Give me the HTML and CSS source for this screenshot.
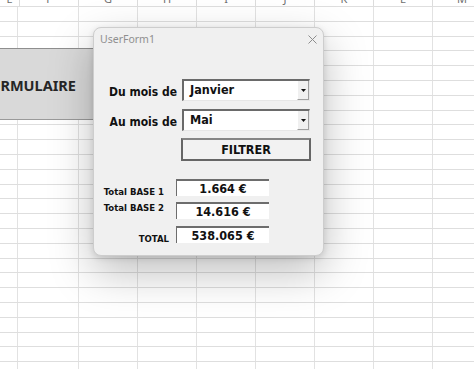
FILE: index.html
```html
<!DOCTYPE html>
<html lang="fr">
<head>
<meta charset="utf-8">
<title>UserForm1</title>
<link rel="stylesheet" href="styles.css">
</head>
<body>
<div class="sheet">
  <div class="colhead">
    <div class="col first"><span>E</span></div>
    <div class="col"><span>F</span></div>
    <div class="col"><span>G</span></div>
    <div class="col"><span>H</span></div>
    <div class="col"><span>I</span></div>
    <div class="col"><span>J</span></div>
    <div class="col"><span>K</span></div>
    <div class="col"><span>L</span></div>
    <div class="col"><span>M</span></div>
  </div>
  <div class="cells"></div>
</div>

<div class="shape"><span class="shape-text">FORMULAIRE</span></div>

<div class="dialog">
  <div class="titlebar">
    <span class="title">UserForm1</span>
    <svg class="close" width="9" height="9" viewBox="0 0 9 9"><path d="M0.5 0.5 L8.5 8.5 M8.5 0.5 L0.5 8.5" stroke="#8d8d8d" stroke-width="1" fill="none"/></svg>
  </div>
  <div class="form">
    <div class="pick-row">
      <span class="pick-label">Du mois de</span>
      <div class="combo"><span class="combo-text">Janvier</span><span class="drop"><svg width="5" height="3" viewBox="0 0 5 3"><path d="M0 0 H5 L2.5 3 Z" fill="#111"/></svg></span></div>
    </div>
    <div class="pick-row second">
      <span class="pick-label">Au mois de</span>
      <div class="combo"><span class="combo-text">Mai</span><span class="drop"><svg width="5" height="3" viewBox="0 0 5 3"><path d="M0 0 H5 L2.5 3 Z" fill="#111"/></svg></span></div>
    </div>
    <div class="btn-row"><button class="btn">FILTRER</button></div>

    <div class="totals">
      <div class="tot-row r1"><span class="tot-label low">Total BASE 1</span><span class="tot-box">1.664 €</span></div>
      <div class="tot-row r2"><span class="tot-label high">Total BASE 2</span><span class="tot-box">14.616 €</span></div>
      <div class="tot-row r3"><span class="tot-label low total">TOTAL</span><span class="tot-box">538.065 €</span></div>
    </div>
  </div>
</div>
</body>
</html>
```

FILE: styles.css
```css
* { box-sizing: border-box; }
html, body { margin: 0; padding: 0; }
body {
  width: 474px;
  height: 369px;
  overflow: hidden;
  background: #ffffff;
  position: relative;
  font-family: "Noto Sans", "Liberation Sans", sans-serif;
}

.sheet {
  display: flex;
  flex-direction: column;
  height: 369px;
}

.colhead {
  display: flex;
  height: 6px;
  overflow: hidden;
  background: #ffffff;
  flex: none;
}
.col {
  width: 59px;
  flex: none;
  border-right: 1px solid #dcdcdc;
  text-align: center;
  font-size: 11px;
  color: #707070;
}
.col.first { width: 20px; }
.col span {
  display: block;
  line-height: 14px;
  margin-top: -8px;
}

.cells {
  flex: 1;
  background-image:
    repeating-linear-gradient(to bottom, #dedede 0, #dedede 1px, transparent 1px, transparent 14.8px),
    repeating-linear-gradient(to right, transparent 0, transparent 58px, #e2e2e2 58px, #e2e2e2 59px);
  background-position: 0 0, 20px 0;
}

.shape {
  position: absolute;
  left: -40px;
  top: 48px;
  width: 140px;
  height: 72px;
  background: #d9d9d9;
  border-top: 1px solid #8e8e8e;
  border-bottom: 1px solid #9a9a9a;
  display: flex;
  align-items: center;
  padding-left: 21px;
  padding-top: 2px;
}
.shape-text {
  font-family: "Noto Sans", sans-serif;
  font-weight: 700;
  font-size: 14.5px;
  color: #262626;
}

.dialog {
  position: absolute;
  left: 93px;
  top: 27px;
  width: 231px;
  height: 229px;
  background: #f0f0f0;
  border: 1px solid #cdcdcd;
  border-radius: 8px;
  box-shadow: 0 16px 44px rgba(0,0,0,0.26), 0 2px 6px rgba(0,0,0,0.12);
  display: flex;
  flex-direction: column;
}

.titlebar {
  height: 21px;
  display: flex;
  align-items: center;
  justify-content: space-between;
  padding: 0 6px 0 6px;
  flex: none;
}
.title {
  font-family: "Noto Sans", sans-serif;
  font-size: 10.5px;
  color: #8f8f8f;
  padding-top: 1px;
}
.close { display: block; margin-top: 1px; }

.form {
  padding-top: 30px;
  font-family: "DejaVu Sans Condensed", "DejaVu Sans", sans-serif;
  font-stretch: condensed;
  font-weight: 700;
  color: #111;
}

.pick-row {
  display: flex;
  align-items: center;
  height: 22px;
}
.pick-row.second { margin-top: 8px; }
.pick-label {
  width: 83px;
  text-align: right;
  font-size: 12px;
  padding-top: 4px;
  margin-right: 5px;
}
.combo {
  width: 128px;
  height: 22px;
  background: #ffffff;
  border-top: 2px solid #6a6a6a;
  border-left: 2px solid #6a6a6a;
  border-right: 1px solid #e6e6e6;
  border-bottom: 1px solid #e6e6e6;
  display: flex;
  align-items: stretch;
}
.combo-text {
  flex: 1;
  font-size: 12.5px;
  padding-left: 6px;
  line-height: 18px;
}
.drop {
  width: 12px;
  background: #f0f0f0;
  border-left: 1px solid #ffffff;
  border-right: 1px solid #a0a0a0;
  border-bottom: 1px solid #a0a0a0;
  display: flex;
  align-items: center;
  justify-content: center;
}
.drop svg { display: block; }

.btn-row {
  margin-top: 7px;
  padding-left: 87px;
}
.btn {
  width: 130px;
  height: 23px;
  margin: 0;
  padding: 0;
  background: #f2f2f2;
  border: 2px solid #666666;
  border-top-color: #858585;
  font-family: "DejaVu Sans Condensed", "DejaVu Sans", sans-serif;
  font-stretch: condensed;
  font-weight: 700;
  font-size: 12.5px;
  color: #111;
}

.totals {
  margin-top: 18px;
  display: flex;
  flex-direction: column;
}
.tot-row {
  display: flex;
  align-items: center;
  height: 17px;
}
.tot-row.r2 { margin-top: 6px; }
.tot-row.r3 { margin-top: 7px; }
.tot-label {
  width: 82px;
  text-align: right;
  padding-right: 12px;
  font-size: 9.5px;
}
.tot-label.total { padding-right: 7px; }
.tot-label.low { margin-top: 7px; }
.tot-label.high { margin-bottom: 6px; }
.tot-box {
  width: 93px;
  height: 17px;
  background: #ffffff;
  border-top: 2px solid #6d6d6d;
  border-left: 1px solid #6d6d6d;
  text-align: center;
  font-size: 12.5px;
  line-height: 15px;
}
```
